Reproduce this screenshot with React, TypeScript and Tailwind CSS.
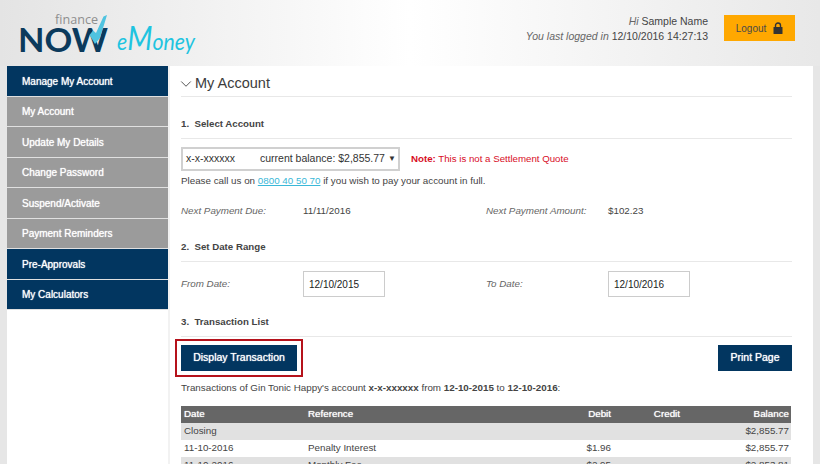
import { ChevronDown } from "lucide-react";

const navItems = [
  { label: "Manage My Account", active: true },
  { label: "My Account" },
  { label: "Update My Details" },
  { label: "Change Password" },
  { label: "Suspend/Activate" },
  { label: "Payment Reminders" },
  { label: "Pre-Approvals", active: true },
  { label: "My Calculators", active: true },
];

const rows = [
  { date: "Closing", ref: "", debit: "", balance: "$2,855.77", shaded: true },
  { date: "11-10-2016", ref: "Penalty Interest", debit: "$1.96", balance: "$2,855.77" },
  { date: "11-10-2016", ref: "Monthly Fee", debit: "$2.95", balance: "$2,853.81", shaded: true },
];

function Logo() {
  return (
    <svg width="200" height="60" viewBox="0 0 200 60" className="block">
      <text x="55" y="19" fontFamily="'Open Sans', sans-serif" fontSize="13" textLength="43" lengthAdjust="spacingAndGlyphs" fill="#8e8e8e">
        finance
      </text>
      <text x="18" y="47" fontFamily="Lato, sans-serif" fontWeight="700" fontSize="33" textLength="90" lengthAdjust="spacingAndGlyphs" fill="#0b3a5c">
        NOW
      </text>
      <path d="M107 10 L103.500 11.500 L96 28 L93 25.500 L89.500 30 L95 39 L100 33 Z" fill="#4fc3e0" />
      <text x="117" y="45" fontFamily="Lato, sans-serif" fontStyle="italic" fontWeight="400" fontSize="24" textLength="78" lengthAdjust="spacingAndGlyphs" fill="#1fc4e0">
        e<tspan fontSize="33">M</tspan>oney
      </text>
    </svg>
  );
}

function LockIcon() {
  return (
    <svg width="10" height="12" viewBox="0 0 10 12" className="block">
      <path d="M2.500 5.500 V3.500 a2.500 2.500 0 0 1 5 0 V5.500" fill="none" stroke="#333" strokeWidth="1.400" />
      <rect x="0.500" y="5" width="9" height="7" rx="0.500" fill="#333" />
    </svg>
  );
}

function SectionTitle({ children }: { children: React.ReactNode }) {
  return (
    <div className="h-[25px] border-b border-[#e8e8e8] text-[9.7px] leading-[20px] font-bold text-[#444]">
      {children}
    </div>
  );
}

export default function App() {
  return (
    <div className="h-[464px] w-[820px] overflow-hidden bg-[#e6e6e6] font-['Liberation_Sans',Arial,sans-serif] text-[9.8px] text-[#444]">
      <header className="flex h-[66px] bg-gradient-to-r from-[#e4e4e4] via-white to-[#e8e8e8]">
        <div className="pt-[5px]">
          <Logo />
        </div>
        <div className="ml-auto mr-[25px] flex pt-[14px]">
          <div className="text-right text-[10.5px] leading-[15px]">
            <div>
              <i className="text-[#666]">Hi</i> Sample Name
            </div>
            <div>
              <i className="text-[#666]">You last logged in</i> 12/10/2016 14:27:13
            </div>
          </div>
          <button className="mt-[1px] ml-[16px] flex h-[26px] w-[71px] items-center justify-center gap-[7px] bg-[#ffa800] text-[10px] text-[#4a4a4a]">
            Logout
            <LockIcon />
          </button>
        </div>
      </header>

      <div className="mx-[7px] flex h-[398px] bg-white">
        <nav className="flex w-[161px] flex-col">
          {navItems.map((item) => (
            <div
              key={item.label}
              className={`flex h-[30.5px] items-center border-b border-[#e0e0e0] pt-[1px] pl-[15px] text-[10px] text-white [text-shadow:0_0_1px_#ffffff] ${
                item.active ? "bg-[#023660]" : "bg-[#9b9b9b]"
              }`}
            >
              {item.label}
            </div>
          ))}
        </nav>
        <div className="w-[2px] bg-[#f2f2f2]" />
        <main className="ml-[11px] w-[611px]">
          <div className="flex h-[31px] items-center border-b border-[#e8e8e8] pt-[5px] text-[14.5px] text-[#3c3c3c]">
            <ChevronDown size={18} strokeWidth={1.2} className="-ml-[4px] text-[#444]" />
            My Account
          </div>

          <div className="mt-[17px]">
            <SectionTitle>1.&nbsp; Select Account</SectionTitle>
          </div>
          <div className="mt-[8px] flex items-center">
            <div className="flex h-[24px] w-[219px] items-center border-2 border-[#d0d0d0] pl-[3px] text-[10.5px] text-[#333]">
              <span className="w-[74px]">x-x-xxxxxx</span>
              <span>current balance: $2,855.77</span>
              <span className="ml-[3px] text-[8px]">▼</span>
            </div>
            <div className="ml-[11px] text-[9.7px] text-[#d80d1f]">
              <b>Note:</b> This is not a Settlement Quote
            </div>
          </div>
          <div className="mt-[2px] leading-[15px]">
            Please call us on <span className="text-[#3ab8d8] underline">0800 40 50 70</span> if you wish to pay your account in full.
          </div>

          <div className="mt-[15px] grid grid-cols-[122px_183px_122px_1fr] leading-[15px]">
            <i className="text-[#666]">Next Payment Due:</i>
            <span>11/11/2016</span>
            <i className="text-[#666]">Next Payment Amount:</i>
            <span>$102.23</span>
          </div>

          <div className="mt-[19px]">
            <SectionTitle>2.&nbsp; Set Date Range</SectionTitle>
          </div>
          <div className="mt-[9px] grid grid-cols-[122px_183px_122px_1fr] items-center">
            <i className="text-[#666]">From Date:</i>
            <div className="flex h-[26px] w-[82px] items-center border border-[#ccc] pl-[5px] text-[10px] text-[#222]">12/10/2015</div>
            <i className="text-[#666]">To Date:</i>
            <div className="flex h-[26px] w-[82px] items-center border border-[#ccc] pl-[5px] text-[10px] text-[#222]">12/10/2016</div>
          </div>

          <div className="mt-[15px]">
            <SectionTitle>3.&nbsp; Transaction List</SectionTitle>
          </div>
          <div className="mt-[8px] flex justify-between">
            <button className="h-[26px] w-[116px] bg-[#023660] text-[10.5px] text-white outline-2 outline-offset-[4px] outline-[#b5121b] [text-shadow:0_0_1px_#ffffff]">
              Display Transaction
            </button>
            <button className="h-[26px] w-[74px] bg-[#023660] text-[10.5px] text-white [text-shadow:0_0_1px_#ffffff]">Print Page</button>
          </div>
          <div className="mt-[9px] leading-[15px]">
            Transactions of Gin Tonic Happy's account <b>x-x-xxxxxx</b> from <b>12-10-2015</b> to <b>12-10-2016</b>:
          </div>

          <div className="mt-[11px] w-[610px]">
            <div className="grid h-[17px] grid-cols-[124px_240px_63px_69px_1fr] items-center bg-[#666] pl-[3px] text-white [text-shadow:0_0_1px_#ffffff]">
              <span>Date</span>
              <span>Reference</span>
              <span className="text-right">Debit</span>
              <span className="text-right">Credit</span>
              <span className="pr-[2px] text-right">Balance</span>
            </div>
            {rows.map((row, i) => (
              <div
                key={i}
                className={`grid h-[17px] grid-cols-[124px_240px_63px_69px_1fr] items-center pl-[3px] ${row.shaded ? "bg-[#e1e1e1]" : "bg-white"}`}
              >
                <span>{row.date}</span>
                <span>{row.ref}</span>
                <span className="text-right">{row.debit}</span>
                <span />
                <span className="pr-[2px] text-right">{row.balance}</span>
              </div>
            ))}
          </div>
        </main>
      </div>
    </div>
  );
}
